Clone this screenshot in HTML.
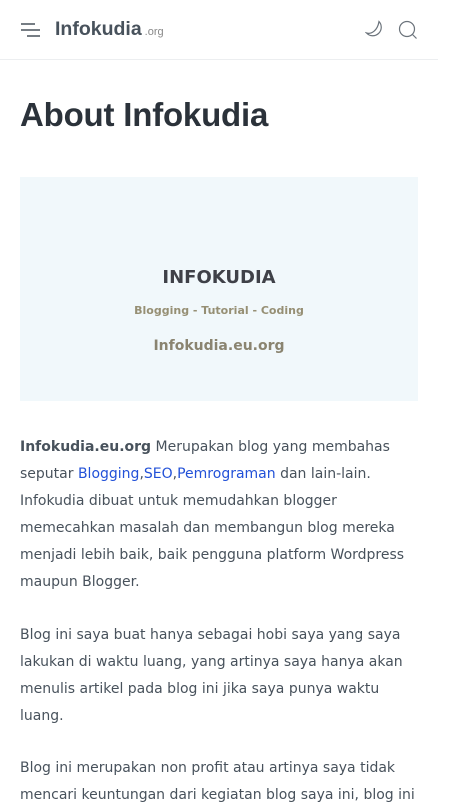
<!DOCTYPE html>
<html><head><meta charset="utf-8"><style>
*{margin:0;padding:0;box-sizing:border-box}
body{width:450px;height:811px;overflow:hidden;background:#fff;font-family:"DejaVu Sans","Liberation Sans",sans-serif;color:#48525c}
.hdr{position:absolute;left:0;top:0;width:438px;height:60px;border-bottom:1px solid #eceef0}
.logo{position:absolute;left:55px;top:18px;font-family:"Liberation Sans",sans-serif;font-weight:bold;font-size:19.5px;color:#48525c}
.logo small{font-weight:normal;font-size:11px;color:#888;margin-left:3px}
h1{position:absolute;left:20px;top:96px;font-family:"Liberation Sans",sans-serif;font-weight:bold;font-size:33px;color:#2b323a;letter-spacing:-0.2px}
.img{position:absolute;left:20px;top:177px;width:398px;height:224px;background:#f1f8fb;text-align:center;font-family:"DejaVu Sans",sans-serif}
.t1{position:absolute;top:90px;width:100%;font-weight:bold;font-size:18px;color:#3f4148}
.t2{position:absolute;top:127px;width:100%;font-weight:bold;font-size:11px;color:#968f74}
.t3{position:absolute;top:161px;width:100%;font-weight:bold;font-size:14px;color:#8a8470}
.p{position:absolute;left:20px;font-size:14px;line-height:27px;white-space:nowrap}
a{color:#2251d8;text-decoration:none}
</style></head><body>
<div class="hdr">
<svg style="position:absolute;left:20px;top:22px" width="21" height="16" viewBox="0 0 21 16" fill="none" stroke="#48525c" stroke-width="1.4"><path d="M1 2h14M1 8h19M7 14h13"/></svg>
<div class="logo">Infokudia<small>.org</small></div>
<svg style="position:absolute;left:365px;top:19px" width="22" height="22" viewBox="0 0 22 22" fill="none" stroke="#6b737b" stroke-width="1.2"><path d="M14 2.5a8 8 0 1 1-12.5 11.5c5 1.5 11-2.5 12.5-11.5z"/></svg>
<svg style="position:absolute;left:398px;top:20px" width="20" height="20" viewBox="0 0 20 20" fill="none" stroke="#6b737b" stroke-width="1.2"><circle cx="9" cy="9" r="7.5"/><path d="M14.5 14.5l4 4"/></svg>
</div>
<h1>About Infokudia</h1>
<div class="img"><div class="t1">INFOKUDIA</div><div class="t2">Blogging - Tutorial - Coding</div><div class="t3">Infokudia.eu.org</div></div>
<div class="p" style="top:434px"><b>Infokudia.eu.org</b> Merupakan blog yang membahas<br>seputar <a>Blogging</a>,<a>SEO</a>,<a>Pemrograman</a> dan lain-lain.<br>Infokudia dibuat untuk memudahkan blogger<br>memecahkan masalah dan membangun blog mereka<br>menjadi lebih baik, baik pengguna platform Wordpress<br>maupun Blogger.</div>
<div class="p" style="top:622px">Blog ini saya buat hanya sebagai hobi saya yang saya<br>lakukan di waktu luang, yang artinya saya hanya akan<br>menulis artikel pada blog ini jika saya punya waktu<br>luang.</div>
<div class="p" style="top:755px">Blog ini merupakan non profit atau artinya saya tidak<br>mencari keuntungan dari kegiatan blog saya ini, blog ini</div>
</body></html>
